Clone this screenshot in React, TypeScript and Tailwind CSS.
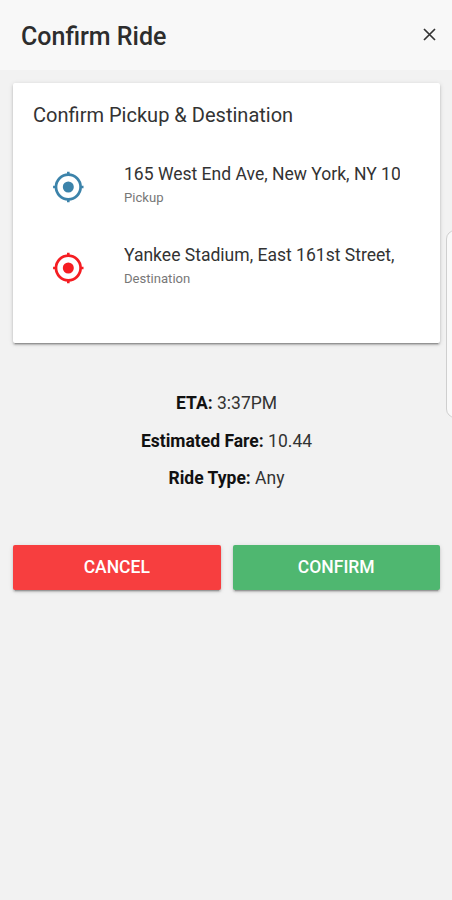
import React from "react";

function TargetIcon({ className }: { className: string }) {
  return (
    <svg viewBox="0 0 32 32" className={`h-8 w-8 ${className}`} fill="none" stroke="currentColor">
      <circle cx="16.3" cy="16" r="12.3" strokeWidth="2.7" />
      <circle cx="16.3" cy="16" r="5.5" fill="currentColor" stroke="none" />
      <path d="M16.3 .8V4M16.3 28v3.2M1.1 16H4.3M28.3 16h3.2" strokeWidth="2.6" />
    </svg>
  );
}

type StopProps = { address: string; label: string; color: string };

function Stop({ address, label, color }: StopProps) {
  return (
    <div className="flex h-[81px]">
      <div className="w-[72px] shrink-0 pt-[15px]">
        <TargetIcon className={color} />
      </div>
      <div className="w-[275.5px] overflow-hidden whitespace-nowrap">
        <div className="pt-[6px] text-[17.55px] leading-6 text-[#333]">{address}</div>
        <div className="pt-[3px] text-[13.1px] leading-[18px] text-[#777]">{label}</div>
      </div>
    </div>
  );
}

function Detail({ label, value }: { label: string; value: string }) {
  return (
    <p className="h-[37.5px] text-[17.5px] leading-6 text-[#333]">
      <b className="font-bold text-[#111]">{label}:</b> {value}
    </p>
  );
}

export default function App() {
  return (
    <div className="relative h-[900px] w-full overflow-hidden bg-[#f2f2f2] font-[Roboto,sans-serif]">
      <header className="flex h-[70px] items-center justify-between bg-[#f8f8f8] pr-[16px] pl-[21px]">
        <h1 className="pt-[3px] text-[25px] leading-8 font-medium text-[#2d2d2d]">Confirm Ride</h1>
        <button aria-label="Close" className="pb-[2px] text-[#333]">
          <svg viewBox="0 0 13 13" className="h-[13px] w-[13px]" fill="none" stroke="currentColor" strokeWidth="1.7">
            <path d="M1 1l11 11M12 1L1 12" />
          </svg>
        </button>
      </header>

      <main className="pt-[13px] pr-3 pl-[13px]">
        <section className="h-[260px] rounded-[2px] bg-white shadow-[0_2px_2px_0_rgba(0,0,0,0.18),0_3px_1px_-2px_rgba(0,0,0,0.2),0_1px_5px_0_rgba(0,0,0,0.14)]">
          <h2 className="pt-[20px] pl-5 text-[20.05px] leading-6 text-[#333]">Confirm Pickup &amp; Destination</h2>
          <div className="pt-[29px] pl-[39px]">
            <Stop address="165 West End Ave, New York, NY 10" label="Pickup" color="text-[#3c83aa]" />
            <Stop address="Yankee Stadium, East 161st Street," label="Destination" color="text-[#f51d22]" />
          </div>
        </section>

        <div className="mt-[47px] h-[155px] pt-[1px] text-center">
          <Detail label="ETA" value="3:37PM" />
          <Detail label="Estimated Fare" value="10.44" />
          <Detail label="Ride Type" value="Any" />
        </div>

        <div className="grid grid-cols-2 gap-3 text-[17.5px] font-medium text-white">
          <button className="h-[45px] rounded-[2px] bg-[#f73e3f] shadow-[0_2px_2px_rgba(0,0,0,0.16),0_3px_1px_-2px_rgba(0,0,0,0.2),0_1px_5px_rgba(0,0,0,0.12)]">CANCEL</button>
          <button className="h-[45px] rounded-[2px] bg-[#4fb770] shadow-[0_2px_2px_rgba(0,0,0,0.16),0_3px_1px_-2px_rgba(0,0,0,0.2),0_1px_5px_rgba(0,0,0,0.12)]">CONFIRM</button>
        </div>
      </main>

      <div className="absolute top-[230px] -right-3 h-[188px] w-[18px] rounded-[10px] border border-[#cfcfcf] bg-[#f9f9f9]" />
    </div>
  );
}
